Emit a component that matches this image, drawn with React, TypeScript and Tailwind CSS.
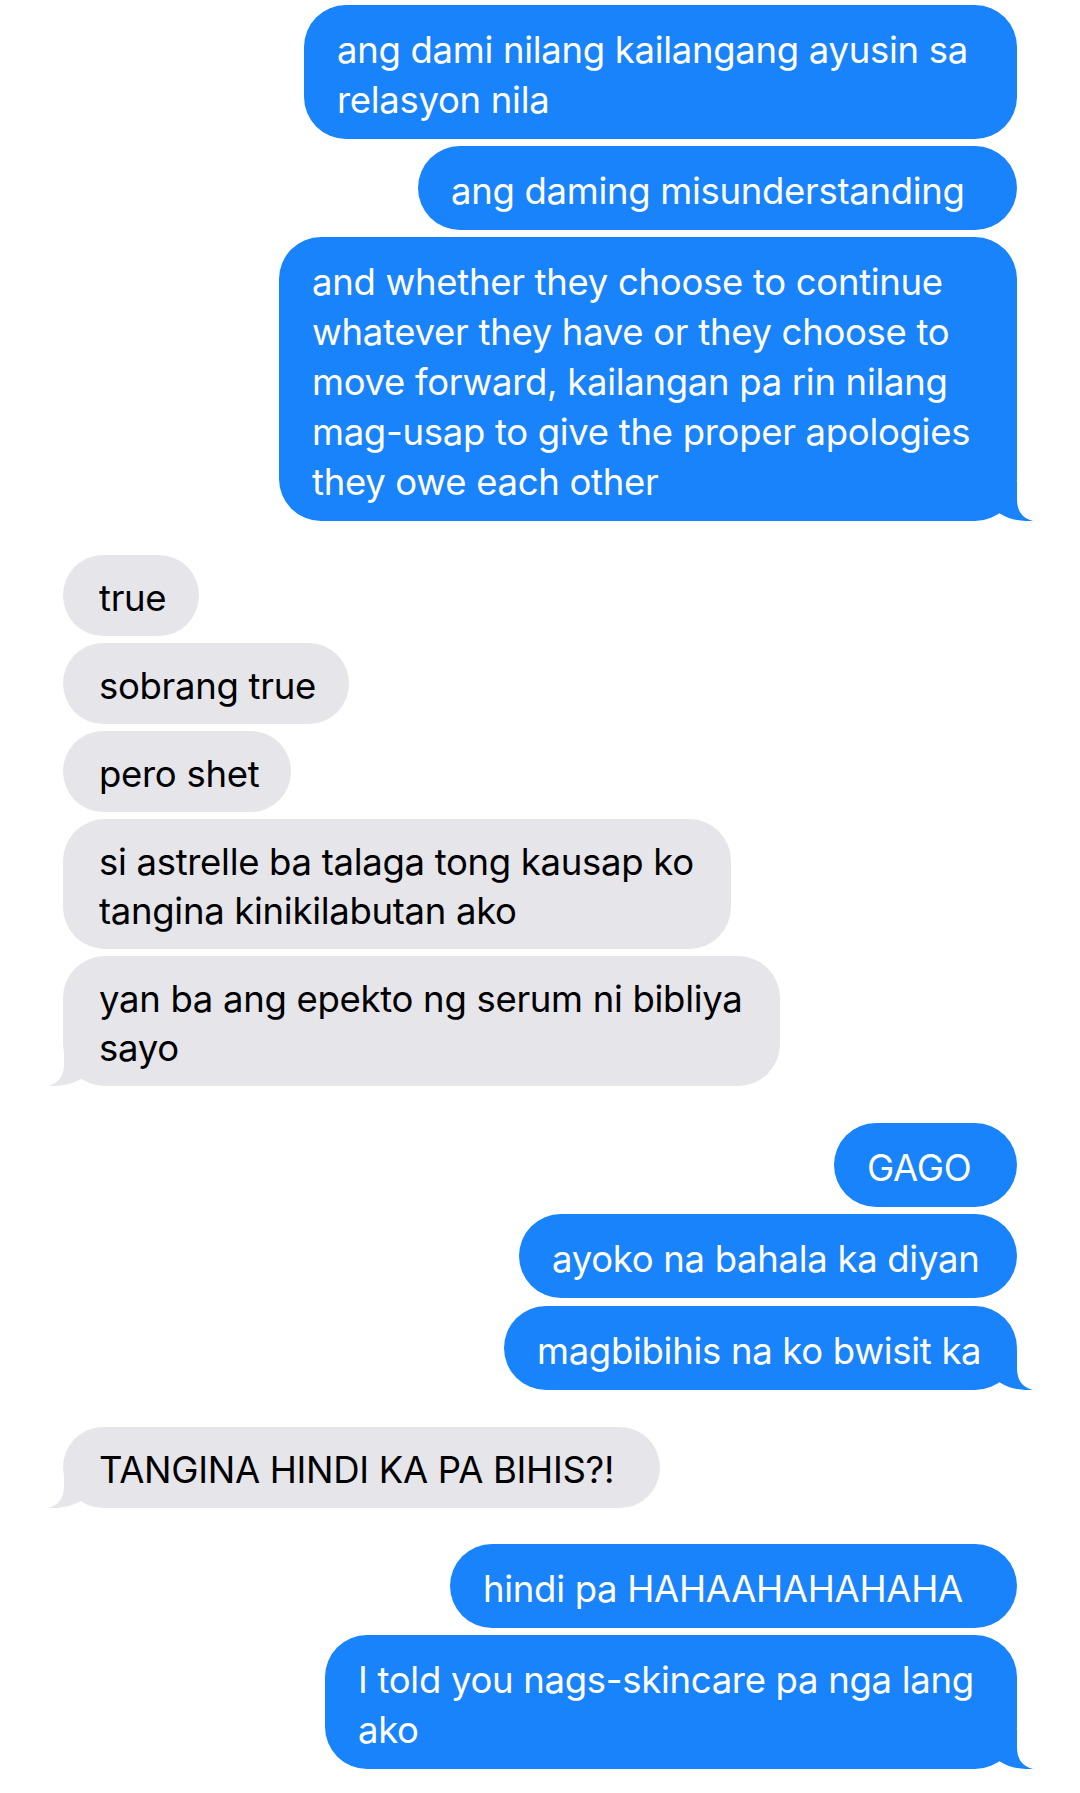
import React from "react";

type Msg = {
  side: "me" | "them";
  lines: string[];
  cls: string;
  tail?: boolean;
};

const msgs: Msg[] = [
  { side: "me", lines: ["ang dami nilang kailangang ayusin sa", "relasyon nila"], cls: "w-[713px] mt-[5px]" },
  { side: "me", lines: ["ang daming misunderstanding"], cls: "w-[599px] mt-[7px]" },
  {
    side: "me",
    lines: [
      "and whether they choose to continue",
      "whatever they have or they choose to",
      "move forward, kailangan pa rin nilang",
      "mag-usap to give the proper apologies",
      "they owe each other",
    ],
    cls: "w-[738px] mt-[7px]",
    tail: true,
  },
  { side: "them", lines: ["true"], cls: "w-[136px] mt-[34px]" },
  { side: "them", lines: ["sobrang true"], cls: "w-[286px] mt-[7px]" },
  { side: "them", lines: ["pero shet"], cls: "w-[228px] mt-[7px]" },
  { side: "them", lines: ["si astrelle ba talaga tong kausap ko", "tangina kinikilabutan ako"], cls: "w-[668px] mt-[7px]" },
  { side: "them", lines: ["yan ba ang epekto ng serum ni bibliya", "sayo"], cls: "w-[717px] mt-[7px]", tail: true },
  { side: "me", lines: ["GAGO"], cls: "w-[183px] mt-[37px]" },
  { side: "me", lines: ["ayoko na bahala ka diyan"], cls: "w-[498px] mt-[7px]" },
  { side: "me", lines: ["magbibihis na ko bwisit ka"], cls: "w-[513px] mt-[8px]", tail: true },
  { side: "them", lines: ["TANGINA HINDI KA PA BIHIS?!"], cls: "w-[597px] mt-[37px]", tail: true },
  { side: "me", lines: ["hindi pa HAHAAHAHAHAHA"], cls: "w-[567px] mt-[36px]" },
  { side: "me", lines: ["I told you nags-skincare pa nga lang", "ako"], cls: "w-[692px] mt-[7px]", tail: true },
];

function Tail({ side }: { side: "me" | "them" }) {
  const me = side === "me";
  return (
    <svg
      width="46"
      height="40"
      viewBox="0 0 46 40"
      className={
        me
          ? "absolute bottom-0 right-[-16px]"
          : "absolute bottom-0 left-[-15px] scale-x-[-1]"
      }
    >
      <path
        d="M30 0 L30 18 C30 30 35 37 46 40 C36 40.5 22 39 12 32 L0 30 L0 0 Z"
        fill={me ? "#1983FC" : "#E5E5EA"}
      />
    </svg>
  );
}

function Bubble({ m }: { m: Msg }) {
  const me = m.side === "me";
  const [w, mt] = m.cls.split(" ");
  return (
    <div className={(me ? "flex justify-end " : "flex justify-start ") + mt}>
      <div
        className={
          (me
            ? "relative rounded-[42px] bg-[#1983FC] pt-[20px] pb-[14px] pl-[33px] text-white leading-[50px] "
            : "relative rounded-[42px] bg-[#E5E5EA] pt-[19px] pb-[13px] pl-[36px] text-black leading-[49px] ") + w
        }
      >
        {m.lines.map((l, i) => (
          <div key={i} className="whitespace-nowrap">
            {l}
          </div>
        ))}
        {m.tail && <Tail side={m.side} />}
      </div>
    </div>
  );
}

export default function App() {
  return (
    <div className="w-[1080px] min-h-[1793px] bg-white px-[63px] text-[36.5px] tracking-[-0.3px] font-['Inter','Noto_Sans',sans-serif]">
      {msgs.map((m, i) => (
        <Bubble key={i} m={m} />
      ))}
    </div>
  );
}
